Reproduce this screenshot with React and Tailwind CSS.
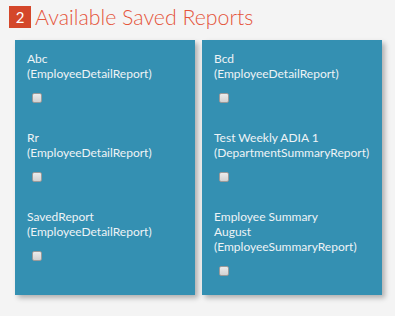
import React from "react";

const left = [
  { lines: ["Abc", "(EmployeeDetailReport)"] },
  { lines: ["Rr", "(EmployeeDetailReport)"] },
  { lines: ["SavedReport", "(EmployeeDetailReport)"] },
];

const right = [
  { lines: ["Bcd", "(EmployeeDetailReport)"] },
  { lines: ["Test Weekly ADIA 1", "(DepartmentSummaryReport)"] },
  { lines: ["Employee Summary", "August", "(EmployeeSummaryReport)"] },
];

function ReportCard({ items }) {
  return (
    <div className="bg-[#3490b2] pt-[11px] pb-[19px] pl-[12px] pr-2 flex flex-col gap-[27px] shadow-[3px_3px_5px_rgba(0,0,0,0.28)]">
      {items.map((item, i) => (
        <div key={i} className="flex flex-col">
          <div className="text-[12px] leading-[15px] text-[#eef3f6]">
            {item.lines.map((l, j) => (
              <div key={j}>{l}</div>
            ))}
          </div>
          <div className="mt-[12px] ml-[5px] w-[10px] h-[10px] rounded-[2px] border border-[#9a9a9a] bg-gradient-to-b from-[#ececec] to-[#d2d2d2]"></div>
        </div>
      ))}
    </div>
  );
}

export default function App() {
  return (
    <div className="w-[395px] h-[316px] bg-[#f4f4f4] font-['Lato','Liberation_Sans',sans-serif] overflow-hidden">
      <div className="flex items-center pt-[6px] pl-[9px] gap-[4px]">
        <span className="w-[22px] h-[22px] bg-[#d4472a] text-white text-[15px] flex items-center justify-center">2</span>
        <h1 className="text-[21.3px] font-light leading-[22px] text-[#e5553b]">Available Saved Reports</h1>
      </div>
      <div className="grid grid-cols-[180px_180px] gap-[7px] ml-[15px] mt-[12px]">
        <ReportCard items={left} />
        <ReportCard items={right} />
      </div>
    </div>
  );
}
